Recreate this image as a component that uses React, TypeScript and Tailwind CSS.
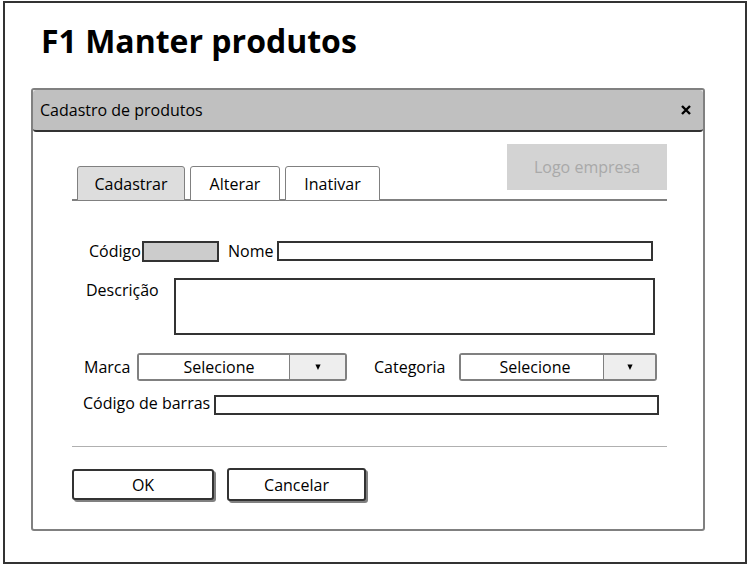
import { useState } from "react";

const tabs = [
  { name: "Cadastrar", width: "w-[108px]" },
  { name: "Alterar", width: "w-[90px]" },
  { name: "Inativar", width: "w-[95px]" },
];

function Dropdown({ id, size, arrow }: { id: string; size: string; arrow: string }) {
  return (
    <div className={`relative h-7 rounded-[3px] border-2 border-[#808080] ${size}`}>
      <select
        id={id}
        className="block h-full w-full appearance-none bg-white pr-[50px] pl-1 text-center [text-align-last:center] leading-6 outline-none"
      >
        <option>Selecione</option>
      </select>
      <span
        aria-hidden="true"
        className={`pointer-events-none absolute inset-y-0 right-0 flex items-center justify-center border-l border-[#808080] bg-[#eee] ${arrow}`}
      >
        <svg viewBox="0 0 6 6" className="h-[6px] w-[6px]">
          <path d="M0.4 0.4h5.2L3 6z" />
        </svg>
      </span>
    </div>
  );
}

export default function App() {
  const [active, setActive] = useState("Cadastrar");
  const box = "border-2 border-[#333] bg-white px-1 outline-none";
  const button =
    "rounded-[3px] border-2 border-[#333] bg-white text-center shadow-[2px_2px_0_#808080]";

  return (
    <div className="bg-white pt-px pr-[2px] pl-[3px] font-['Comic_Sans_MS','Open_Sans',sans-serif] text-[16px] leading-5 text-black">
      <main className="border-2 border-[#333] pt-[18px] pr-10 pb-[31px] pl-[26px]">
        <h1 className="mb-[27px] pl-[10px] text-[32px] leading-10 font-bold">F1 Manter produtos</h1>

        <section className="rounded-[3px] border-2 border-[#808080]">
          <header className="flex h-[42px] items-center justify-between rounded-[3px] border-b-2 border-[#333] bg-[#c0c0c0] pr-3 pl-[7px]">
            <h2>Cadastro de produtos</h2>
            <button type="button" aria-label="Fechar" className="flex h-5 w-[10px] items-center justify-center">
              <svg viewBox="0 0 10 10" className="h-[10px] w-[10px]" stroke="black" strokeWidth="2.4">
                <path d="M1 1l8 8M9 1L1 9" />
              </svg>
            </button>
          </header>

          <form className="pr-9 pb-7 pl-[39px]" onSubmit={(e) => e.preventDefault()}>
            <div className="flex items-end justify-between border-b-2 border-[#808080] pt-3 pl-[5px]">
              <nav className="-mb-[2px] flex gap-[5px]">
                {tabs.map((tab) => (
                  <button
                    key={tab.name}
                    type="button"
                    onClick={() => setActive(tab.name)}
                    className={`h-[35px] rounded-t-[3px] border border-[#808080] ${tab.width} ${
                      active === tab.name ? "bg-[#ddd]" : "bg-white"
                    }`}
                  >
                    {tab.name}
                  </button>
                ))}
              </nav>
              <div className="mb-[9px] flex h-[46px] w-40 items-center justify-center bg-[#d3d3d3] font-medium text-[#a9a9a9]">
                Logo empresa
              </div>
            </div>

            <div className="flex items-start pt-10 pr-[14px] pl-[17px]">
              <label htmlFor="codigo" className="w-[53px] shrink-0">Código</label>
              <input id="codigo" readOnly className="h-[21px] w-[77px] border-2 border-[#333] bg-[#ccc] px-1 outline-none" />
              <label htmlFor="nome" className="ml-[9px] w-[49px] shrink-0">Nome</label>
              <input id="nome" className={`h-5 min-w-0 flex-1 ${box}`} />
            </div>

            <div className="flex items-start pt-4 pr-3 pl-[14px]">
              <label htmlFor="descricao" className="w-[88px] shrink-0 pt-[2px]">Descrição</label>
              <textarea id="descricao" className={`h-[57px] min-w-0 flex-1 resize-none ${box}`} />
            </div>

            <div className="flex items-center pt-[18px] pr-[10px] pl-3">
              <label htmlFor="marca" className="w-[53px] shrink-0">Marca</label>
              <Dropdown id="marca" size="w-[210px]" arrow="w-14" />
              <label htmlFor="categoria" className="ml-[27px] w-[85px] shrink-0">Categoria</label>
              <Dropdown id="categoria" size="min-w-0 flex-1" arrow="w-[52px]" />
            </div>

            <div className="flex items-end pt-3 pr-2 pl-[11px]">
              <label htmlFor="barras" className="w-[131px] shrink-0 pb-[2px]">Código de barras</label>
              <input id="barras" className={`h-5 min-w-0 flex-1 ${box}`} />
            </div>

            <hr className="mt-[31px] mb-[21px] border-t border-[#b0b0b0]" />

            <div className="flex items-center gap-[13px]">
              <button type="submit" className={`h-[31px] w-[142px] ${button}`}>OK</button>
              <button type="button" className={`h-[33px] w-[139px] ${button}`}>Cancelar</button>
            </div>
          </form>
        </section>
      </main>
    </div>
  );
}
